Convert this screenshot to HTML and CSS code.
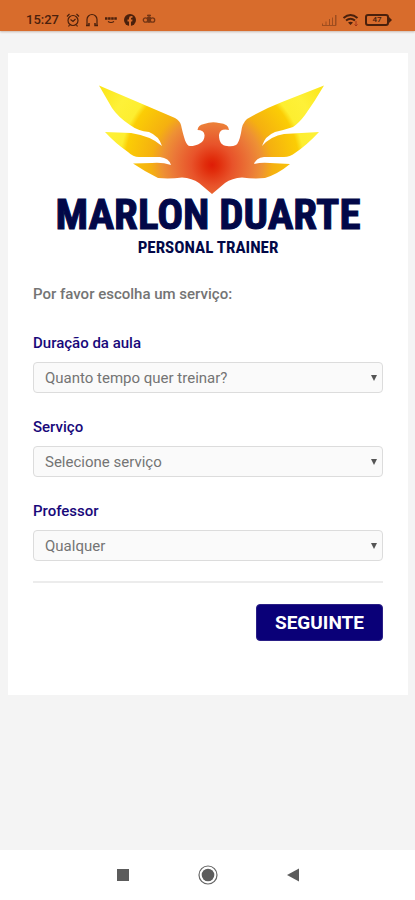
FILE: index.html
```html
<!DOCTYPE html>
<html lang="pt">
<head>
<meta charset="utf-8">
<meta name="viewport" content="width=device-width, initial-scale=1">
<title>Marlon Duarte Personal Trainer</title>
<link rel="stylesheet" href="styles.css">
</head>
<body>
<header class="status">
  <div class="status-group">
    <span class="time">15:27</span>
    <svg width="14" height="14" viewBox="0 0 14 14" fill="none" stroke="currentColor" stroke-width="1.2"><circle cx="7" cy="7.5" r="5"/><path d="M1 3.5 3.5 1M13 3.5 10.500 1M4.500 6.500 7 8.500 9.500 6M3.500 12 2.500 13.500M10.500 12 11.500 13.500"/></svg>
    <svg width="14" height="14" viewBox="0 0 14 14" fill="none" stroke="currentColor" stroke-width="1.200"><path d="M2 12V6.500a5 5 0 0 1 10 0V12"/><path d="M1 12.500h3V10M13 12.500h-3V10" stroke-width="1.500"/></svg>
    <svg width="14" height="14" viewBox="0 0 14 14" fill="none" stroke="currentColor"><path d="M1 5.500h12" stroke-width="2.500" stroke-dasharray="2.500 .6"/><path d="M4 8.500Q7 10.500 10 8.500" stroke-width="1.200"/></svg>
    <svg width="14" height="14" viewBox="0 0 14 14"><circle cx="7" cy="7" r="6" fill="currentColor"/><path d="M6 13V8.500H4.500v-2H6V5.200Q6 3 8.300 3H9.500v1.800H8.600Q8 4.800 8 5.500v1h1.500L9.200 8.500H8V13z" fill="#d86c2c"/></svg>
    <svg class="faded" width="14" height="14" viewBox="0 0 14 14" fill="none" stroke="currentColor" stroke-width="1.300"><circle cx="3.500" cy="7" r="2.200"/><circle cx="10.500" cy="7" r="2.200"/><path d="M5.700 4v5.500M8.300 4v5.500M7 1.500V10M5 2.500h4"/></svg>
  </div>
  <div class="status-group">
    <svg class="dim" width="16" height="12" viewBox="0 0 16 12" fill="none" stroke="currentColor"><path d="M1.500 11V9.500M5 11V7.500M8.500 11V5M11.500 11V3.500M14.500 11V1"/><path d="M1 11.500h14V1"/></svg>
    <svg width="18" height="14" viewBox="0 0 18 14" fill="none" stroke="currentColor" stroke-width="2"><path d="M1.500 5Q8.500-1 15.500 5M4 7.500Q8.500 4 13 7.500"/><path d="M6 9.500Q8.500 8 11 9.500L8.500 12z" fill="currentColor" stroke="none"/><path d="M14 8v5M12.500 11.500 14 13l1.500-1.500" stroke="#a33418" stroke-width="1"/></svg>
    <span class="battery">47<svg class="battery-tip" width="3" height="6" viewBox="0 0 3 6"><path d="M0 0 3 3 0 6z" fill="currentColor"/></svg></span>
  </div>
</header>

<main class="page">
  <section class="card">
    <div class="brand">
      <svg class="bird" viewBox="98 84 228 112" role="img" aria-label="Marlon Duarte">
        <defs>
          <radialGradient id="fire" gradientUnits="userSpaceOnUse" cx="212" cy="165" r="138">
            <stop offset="0" stop-color="#df1c06"/>
            <stop offset=".05" stop-color="#e12d0c"/>
            <stop offset=".15" stop-color="#e8532a"/>
            <stop offset=".28" stop-color="#eb7838"/>
            <stop offset=".36" stop-color="#ee9134"/>
            <stop offset=".44" stop-color="#f5b010"/>
            <stop offset=".63" stop-color="#fbcd05"/>
            <stop offset=".67" stop-color="#fdee30"/>
            <stop offset=".8" stop-color="#fef138"/>
            <stop offset="1" stop-color="#fbe416"/>
          </radialGradient>
        </defs>
        <path fill="url(#fire)" d="M99 85.500 L140 103 L175 118 Q180 121 181 125 C184 138 186 146 190 146 C198 146 205 142 204.500 135 Q204 130 197.500 130 Q198 125 204 124 Q212 121 219 123 Q229 124 229 130 Q220 128 219 135 C219 142 222 146 227 146 Q232 147 236 145 Q239 143 241 133 Q242 123 247 119 Q264 109 282 102 L324 85.500 Q315 101 305 115 Q299 123 293 127 Q284 130 275 132 Q265 136 262 146 Q271 136 284 134 L319 132 Q307 145 295 153 Q290 157 284 157 L264 157 Q256 158 254 164 Q262 162 270 163 L290 164 Q278 174 265 178 Q254 179 242 177.500 Q232 178 225 183 L212 194 L199 183 Q192 178 182 177.500 Q170 179 158 178 Q144 171 133 163.500 L152 163 Q162 162 171 165 Q169 158 160 157 L139 157 Q133 157 128 152 Q115 143 105 132 L131 133 Q151 136 162 146 Q159 136 149 132 Q138 131 130 125 Q118 117 112 108 Z"/>
      </svg>
      <h1 class="brand-name">MARLON DUARTE</h1>
      <p class="brand-tag">PERSONAL TRAINER</p>
    </div>

    <form class="form">
      <p class="prompt">Por favor escolha um serviço:</p>
      <div class="field">
        <label for="duration">Duração da aula</label>
        <div class="select-wrap"><select id="duration"><option>Quanto tempo quer treinar?</option></select></div>
      </div>
      <div class="field">
        <label for="service">Serviço</label>
        <div class="select-wrap"><select id="service"><option>Selecione serviço</option></select></div>
      </div>
      <div class="field">
        <label for="teacher">Professor</label>
        <div class="select-wrap"><select id="teacher"><option>Qualquer</option></select></div>
      </div>
      <div class="actions"><button class="next" type="button">SEGUINTE</button></div>
    </form>
  </section>
</main>

<nav class="navbar">
  <button type="button" aria-label="Recentes"><svg width="20" height="20" viewBox="0 0 20 20"><path d="M4 4h12v12H4z" fill="#5c5c5c"/></svg></button>
  <button type="button" aria-label="Início"><svg width="20" height="20" viewBox="0 0 20 20"><circle cx="10" cy="10" r="9" fill="none" stroke="#666" stroke-width="1.200"/><circle cx="10" cy="10" r="6.300" fill="#5c5c5c"/></svg></button>
  <button type="button" aria-label="Voltar"><svg width="20" height="20" viewBox="0 0 20 20"><path d="M16 3.500v13L4 10z" fill="#5c5c5c"/></svg></button>
</nav>
</body>
</html>
```

FILE: styles.css
```css
* {
  box-sizing: border-box;
}

body {
  margin: 0;
  min-height: 100vh;
  display: flex;
  flex-direction: column;
  background: #f4f4f4;
  color: #747474;
  font-family: Roboto, "Liberation Sans", sans-serif;
  font-size: 15px;
  line-height: 20px;
}

h1,
p {
  margin: 0;
}

svg {
  display: block;
}

.status {
  display: flex;
  justify-content: space-between;
  padding: 8px 24px 0 26px;
  height: 31px;
  background: #d86c2c;
  color: #4a200c;
  box-shadow: 0 1px 2px #c9b8ae;
}

.status-group {
  display: flex;
  align-items: center;
  gap: 5px;
  height: 23px;
}

.time {
  margin-right: 2px;
  font-size: 13px;
  font-weight: 500;
}

.faded {
  opacity: 0.7;
}

.dim {
  opacity: 0.4;
}

.battery {
  position: relative;
  width: 24px;
  height: 12px;
  margin-right: 2px;
  border: 2px solid currentColor;
  border-radius: 3px;
  font-size: 8px;
  font-weight: 500;
  line-height: 8px;
  text-align: center;
}

.battery-tip {
  position: absolute;
  top: 1px;
  left: 22px;
}

.page {
  flex: 1;
  padding: 22px 7px 22px 8px;
}

.card {
  padding: 31px 25px 54px;
  background: #fff;
}

.brand {
  display: flex;
  flex-direction: column;
  align-items: center;
  color: #020848;
  font-family: "Liberation Sans Narrow", "Roboto Condensed", Roboto, sans-serif;
  font-weight: 700;
  white-space: nowrap;
}

.bird {
  width: 228px;
  margin-left: 7px;
}

.brand-name {
  font-size: 43px;
  line-height: 37px;
  -webkit-text-stroke: 1px currentColor;
}

.brand-tag {
  font-size: 17px;
  line-height: 29px;
}

.prompt {
  margin: 22px 0 29px;
  font-weight: 500;
}

.field {
  margin-bottom: 24px;
}

.field label {
  display: block;
  margin-bottom: 9px;
  color: #18087a;
  font-weight: 500;
}

.select-wrap {
  position: relative;
}

.select-wrap::after {
  content: "";
  position: absolute;
  top: 13px;
  right: 6px;
  border: 3px solid transparent;
  border-top: 6px solid #555;
  border-bottom: 0;
  pointer-events: none;
}

select {
  display: block;
  width: 100%;
  height: 31px;
  padding: 0 24px 0 11px;
  appearance: none;
  border: 1px solid #dcdcdc;
  border-radius: 4px;
  background: #fafafa;
  color: #747474;
  font: inherit;
}

.actions {
  display: flex;
  justify-content: flex-end;
  margin-top: -4px;
  padding-top: 21px;
  border-top: 2px solid #ececec;
}

.next {
  height: 37px;
  padding: 0 18px;
  border: 1px solid #2a1f86;
  border-radius: 4px;
  background: #0a0078;
  color: #fff;
  font: inherit;
  font-size: 19px;
  font-weight: 700;
}

.navbar {
  display: flex;
  justify-content: center;
  align-items: center;
  gap: 65px;
  height: 50px;
  background: #fff;
}

.navbar button {
  padding: 0;
  border: 0;
  background: none;
}
```
